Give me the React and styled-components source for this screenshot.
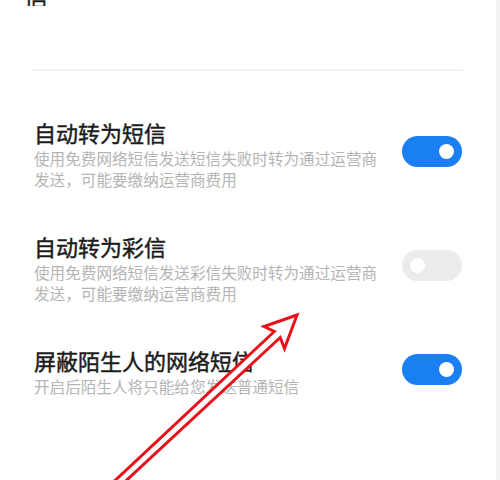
import React from "react";
import styled, { createGlobalStyle } from "styled-components";

const Global = createGlobalStyle`
  html, body { margin: 0; padding: 0; background: #ffffff; }
  body { font-family: "Noto Sans CJK SC", "Noto Sans", sans-serif; }
`;

const Page = styled.div`
  position: relative;
  width: 500px;
  height: 480px;
  overflow: hidden;
  display: flex;
  background: #ffffff;
`;

const Main = styled.main`
  flex: 1;
  display: flex;
  flex-direction: column;
  padding: 0 33px 0 32px;
`;

const Strip = styled.div`
  width: 4px;
  background: #f3f3f3;
`;

const Header = styled.div`
  height: 6px;
  overflow: hidden;
  display: flex;
  align-items: flex-end;
  margin-left: -8px;
`;

const HeaderText = styled.span`
  font-size: 24px;
  line-height: 24px;
  font-weight: 400;
  -webkit-text-stroke: 0.4px #1a1a1a;
  color: #1a1a1a;
  margin-bottom: -2px;
`;

const Divider = styled.div`
  height: 2px;
  background: #f1f1f1;
  margin-top: 63px;
`;

const List = styled.div`
  display: flex;
  flex-direction: column;
  gap: 41px;
  margin-top: 46px;
  padding: 0 1px 0 2px;
`;

const Row = styled.div`
  display: flex;
  align-items: center;
  justify-content: space-between;
`;

const TextCol = styled.div`
  width: 350px;
  display: flex;
  flex-direction: column;
`;

const Title = styled.div`
  font-size: 22px;
  line-height: 30px;
  font-weight: 400;
  -webkit-text-stroke: 0.45px #1b1b1b;
  color: #1b1b1b;
`;

const Sub = styled.div`
  margin-top: 1px;
  font-size: 15.6px;
  line-height: 21px;
  color: #b4b4b4;
`;

const Toggle = styled.div`
  width: 60px;
  height: 31px;
  margin-bottom: 4px;
  border-radius: 16px;
  box-sizing: border-box;
  padding: 0 8px;
  display: flex;
  align-items: center;
  justify-content: ${(p) => (p.$on ? "flex-end" : "flex-start")};
  background: ${(p) => (p.$on ? "#1a7ff2" : "#ececec")};
`;

const Knob = styled.div`
  width: 15px;
  height: 15px;
  border-radius: 50%;
  background: #ffffff;
`;

const Overlay = styled.svg`
  position: absolute;
  left: 0;
  top: 0;
  width: 500px;
  height: 480px;
  pointer-events: none;
`;

const items = [
  {
    title: "自动转为短信",
    sub: "使用免费网络短信发送短信失败时转为通过运营商发送，可能要缴纳运营商费用",
    on: true,
  },
  {
    title: "自动转为彩信",
    sub: "使用免费网络短信发送彩信失败时转为通过运营商发送，可能要缴纳运营商费用",
    on: false,
  },
  {
    title: "屏蔽陌生人的网络短信",
    sub: "开启后陌生人将只能给您发送普通短信",
    on: true,
  },
];

export default function App() {
  return (
    <Page>
      <Global />
      <Main>
        <Header>
          <HeaderText>信</HeaderText>
        </Header>
        <Divider />
        <List>
          {items.map((it) => (
            <Row key={it.title}>
              <TextCol>
                <Title>{it.title}</Title>
                <Sub>{it.sub}</Sub>
              </TextCol>
              <Toggle $on={it.on}>
                <Knob />
              </Toggle>
            </Row>
          ))}
        </List>
      </Main>
      <Strip />
      <Overlay viewBox="0 0 500 480">
        <polygon
          points="297,315 264,326.5 274.3,331.5 104.6,490.3 109.8,495.8 280.2,337.5 284.5,348.5"
          fill="#ffffff"
          stroke="#e8111a"
          strokeWidth="3"
          strokeLinejoin="miter"
        />
      </Overlay>
    </Page>
  );
}
